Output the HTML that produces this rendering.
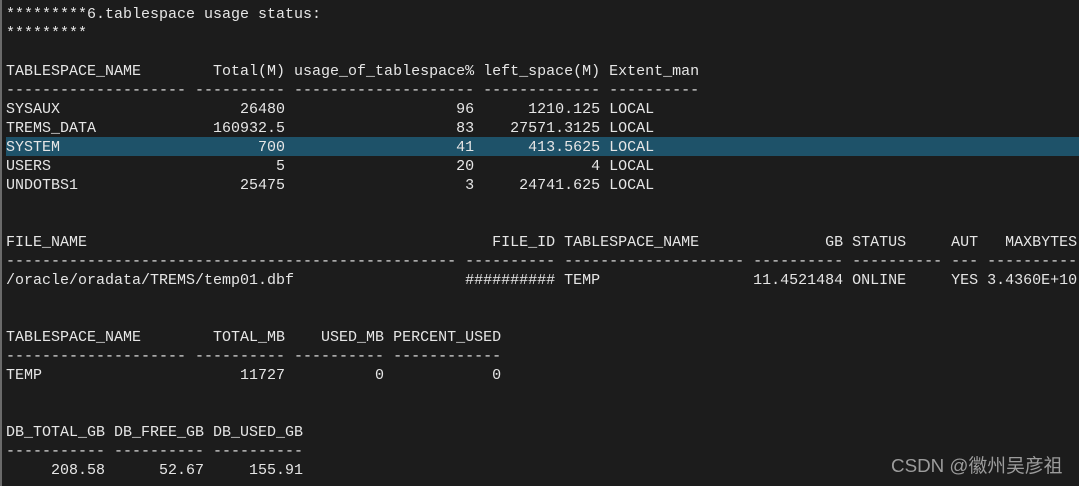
<!DOCTYPE html>
<html><head><meta charset="utf-8"><style>
html,body{margin:0;padding:0;width:1079px;height:486px;overflow:hidden;background:#1c1c1c}
#s{position:absolute;left:0;top:0;width:2px;height:486px;background:#6a6a6a}
#h{position:absolute;left:6px;top:137px;width:1073px;height:19px;background:#1e5269}
pre{position:absolute;left:6px;top:5px;margin:0;font:15px/19px "Liberation Mono",monospace;color:#e6e6e6;white-space:pre}
#w{position:absolute;left:891px;top:455px;font:18.8px/22px "Liberation Sans","Noto Sans CJK SC",sans-serif;color:#9c9c9c;white-space:nowrap}
</style></head><body>
<div id="s"></div><div id="h"></div>
<pre>*********6.tablespace usage status:
*********

TABLESPACE_NAME        Total(M) usage_of_tablespace% left_space(M) Extent_man
-------------------- ---------- -------------------- ------------- ----------
SYSAUX                    26480                   96      1210.125 LOCAL
TREMS_DATA             160932.5                   83    27571.3125 LOCAL
SYSTEM                      700                   41      413.5625 LOCAL
USERS                         5                   20             4 LOCAL
UNDOTBS1                  25475                    3     24741.625 LOCAL


FILE_NAME                                             FILE_ID TABLESPACE_NAME              GB STATUS     AUT   MAXBYTES
-------------------------------------------------- ---------- -------------------- ---------- ---------- --- ----------
/oracle/oradata/TREMS/temp01.dbf                   ########## TEMP                 11.4521484 ONLINE     YES 3.4360E+10


TABLESPACE_NAME        TOTAL_MB    USED_MB PERCENT_USED
-------------------- ---------- ---------- ------------
TEMP                      11727          0            0


DB_TOTAL_GB DB_FREE_GB DB_USED_GB
----------- ---------- ----------
     208.58      52.67     155.91</pre>
<div id="w">CSDN @徽州吴彦祖</div>
</body></html>
